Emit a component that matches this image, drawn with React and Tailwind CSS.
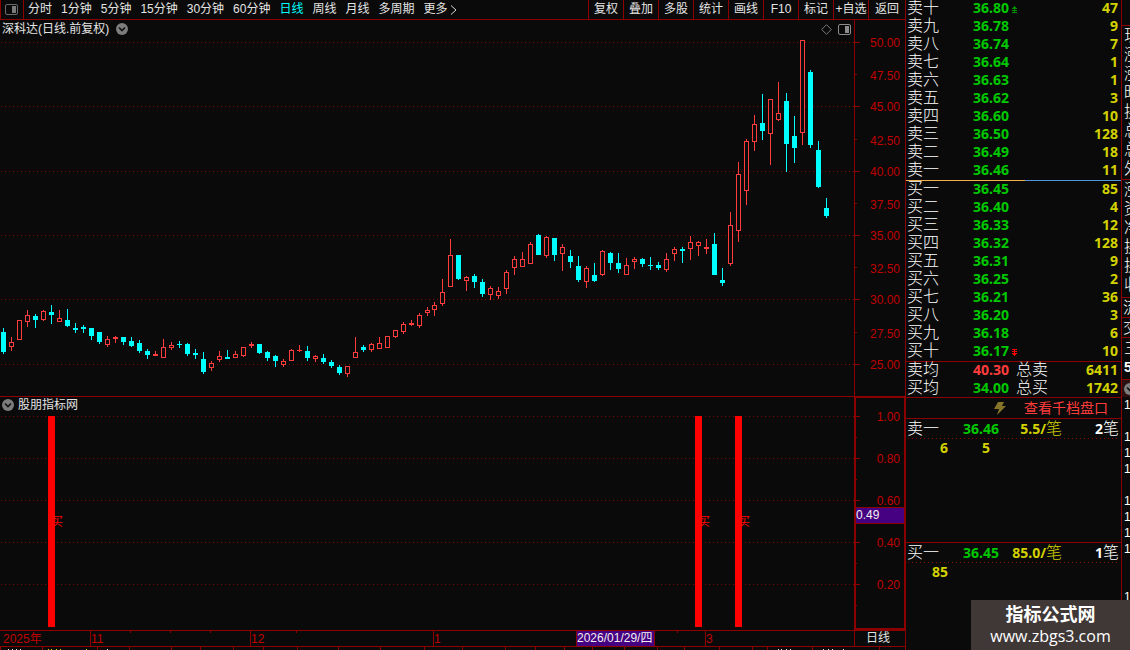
import React from "react";

// [x, high, bodyTop, bodyBottom, low, rising]
const candles = [
  [3, 328, 332, 352, 354, 0],
  [11, 337, 342, 347, 351, 1],
  [19, 320, 320, 340, 340, 1],
  [27, 310, 315, 322, 327, 1],
  [35, 314, 316, 320, 328, 0],
  [43, 310, 311, 320, 321, 1],
  [51, 305, 312, 315, 324, 0],
  [59, 310, 318, 322, 322, 1],
  [67, 309, 320, 326, 327, 0],
  [75, 323, 328, 330, 333, 0],
  [83, 325, 327, 329, 333, 0],
  [91, 328, 328, 336, 340, 0],
  [99, 332, 332, 342, 344, 0],
  [107, 336, 339, 345, 347, 1],
  [115, 336, 337, 339, 343, 1],
  [123, 337, 337, 342, 345, 0],
  [131, 337, 341, 346, 347, 0],
  [139, 340, 343, 351, 353, 0],
  [147, 349, 351, 355, 359, 0],
  [155, 351, 354, 356, 356, 1],
  [163, 339, 347, 358, 358, 1],
  [171, 342, 345, 348, 350, 1],
  [179, 341, 344, 345, 348, 0],
  [187, 343, 344, 354, 356, 0],
  [195, 349, 353, 355, 359, 0],
  [203, 352, 359, 372, 374, 0],
  [211, 361, 363, 368, 371, 1],
  [219, 351, 356, 360, 362, 1],
  [227, 350, 357, 359, 359, 0],
  [235, 351, 354, 358, 358, 1],
  [243, 347, 347, 356, 357, 1],
  [251, 342, 344, 346, 348, 1],
  [259, 344, 344, 353, 354, 0],
  [267, 351, 352, 358, 361, 0],
  [275, 355, 356, 361, 367, 0],
  [283, 359, 361, 365, 367, 1],
  [291, 349, 350, 361, 361, 1],
  [299, 345, 350, 351, 352, 1],
  [307, 346, 351, 358, 361, 0],
  [315, 355, 356, 359, 362, 1],
  [323, 354, 358, 362, 364, 0],
  [331, 360, 362, 366, 368, 0],
  [339, 365, 367, 373, 375, 0],
  [347, 366, 366, 374, 377, 1],
  [355, 337, 352, 358, 358, 1],
  [363, 345, 347, 350, 352, 0],
  [371, 343, 344, 350, 352, 1],
  [379, 337, 343, 349, 349, 1],
  [387, 336, 336, 348, 348, 1],
  [395, 330, 330, 337, 338, 1],
  [403, 322, 324, 332, 334, 1],
  [411, 320, 323, 325, 326, 1],
  [419, 313, 315, 326, 328, 1],
  [427, 307, 310, 313, 316, 1],
  [434, 302, 305, 310, 316, 1],
  [442, 279, 292, 304, 306, 1],
  [450, 239, 255, 287, 287, 1],
  [458, 255, 255, 279, 280, 0],
  [466, 276, 277, 281, 291, 1],
  [474, 274, 276, 282, 288, 0],
  [482, 279, 282, 294, 297, 0],
  [490, 286, 288, 295, 300, 1],
  [498, 287, 291, 296, 299, 1],
  [506, 270, 272, 289, 294, 1],
  [514, 256, 259, 268, 275, 1],
  [522, 252, 259, 267, 267, 1],
  [530, 242, 244, 264, 264, 1],
  [538, 234, 235, 255, 255, 0],
  [546, 236, 237, 256, 258, 1],
  [554, 238, 238, 255, 261, 0],
  [562, 244, 247, 254, 271, 1],
  [570, 250, 256, 262, 268, 0],
  [578, 256, 266, 280, 282, 0],
  [586, 266, 268, 282, 288, 1],
  [594, 263, 275, 281, 282, 0],
  [602, 250, 251, 275, 276, 1],
  [610, 252, 253, 263, 270, 0],
  [618, 253, 263, 269, 273, 0],
  [626, 258, 265, 275, 275, 1],
  [634, 257, 259, 262, 269, 1],
  [642, 258, 259, 264, 267, 0],
  [650, 257, 265, 266, 270, 0],
  [658, 262, 265, 268, 270, 0],
  [666, 253, 259, 270, 272, 1],
  [674, 247, 249, 254, 261, 1],
  [682, 247, 249, 251, 263, 0],
  [690, 236, 242, 249, 260, 1],
  [698, 241, 242, 246, 256, 1],
  [706, 239, 247, 249, 254, 1],
  [714, 233, 244, 275, 275, 0],
  [722, 268, 280, 283, 286, 0],
  [730, 212, 225, 264, 266, 1],
  [738, 162, 174, 231, 242, 1],
  [746, 139, 141, 191, 205, 1],
  [754, 115, 124, 142, 151, 1],
  [762, 94, 123, 131, 140, 0],
  [770, 99, 99, 134, 165, 1],
  [778, 82, 113, 120, 121, 1],
  [786, 93, 101, 144, 172, 0],
  [794, 116, 136, 148, 163, 0],
  [802, 40, 40, 133, 145, 1],
  [810, 70, 72, 145, 148, 0],
  [818, 141, 150, 187, 188, 0],
  [826, 198, 208, 216, 218, 0],
];

const priceTicks = [
  ["50.00", 42],
  ["47.50", 75],
  ["45.00", 106],
  ["42.50", 140],
  ["40.00", 171],
  ["37.50", 204],
  ["35.00", 235],
  ["32.50", 268],
  ["30.00", 299],
  ["27.50", 333],
  ["25.00", 364],
];

const signalTicks = [
  ["1.00", 416],
  ["0.80", 458],
  ["0.60", 500],
  ["0.40", 542],
  ["0.20", 584],
];

const signals = [48, 695, 735];

const periods = [
  "分时",
  "1分钟",
  "5分钟",
  "15分钟",
  "30分钟",
  "60分钟",
  "日线",
  "周线",
  "月线",
  "多周期",
];

const tools = ["复权", "叠加", "多股", "统计", "画线", "F10", "标记", "+自选"];

const asks = [
  ["卖十", "36.80", 47],
  ["卖九", "36.78", 9],
  ["卖八", "36.74", 7],
  ["卖七", "36.64", 1],
  ["卖六", "36.63", 1],
  ["卖五", "36.62", 3],
  ["卖四", "36.60", 10],
  ["卖三", "36.50", 128],
  ["卖二", "36.49", 18],
  ["卖一", "36.46", 11],
];

const bids = [
  ["买一", "36.45", 85],
  ["买二", "36.40", 4],
  ["买三", "36.33", 12],
  ["买四", "36.32", 128],
  ["买五", "36.31", 9],
  ["买六", "36.25", 2],
  ["买七", "36.21", 36],
  ["买八", "36.20", 3],
  ["买九", "36.18", 6],
  ["买十", "36.17", 10],
];

const DottedLine = () => (
  <div className="h-px mx-0.5 bg-[repeating-linear-gradient(90deg,#8c0000_0_1px,transparent_1px_4px)]" />
);

const GridLine = ({ y }) => (
  <line
    x1="1"
    x2="100%"
    y1={y}
    y2={y}
    stroke="#7c0000"
    strokeDasharray="1 3"
    transform="translate(0 0.5)"
  />
);

const ChevronBadge = () => (
  <svg width="12" height="12" viewBox="0 0 12 12">
    <circle cx="6" cy="6" r="6" fill="#7d7d7d" />
    <path d="M3 4.5l3 3 3-3" fill="none" stroke="#111" strokeWidth="1.6" />
  </svg>
);

const PanelIcon = ({ bright }) => (
  <svg width="13" height="11" viewBox="0 0 13 11">
    <rect
      x="0.5"
      y="0.5"
      width="12"
      height="10"
      rx="1.5"
      fill="none"
      stroke={bright ? "#8c8c8c" : "#6a6a6a"}
    />
    <rect x="7" y="2" width="4" height="7" fill={bright ? "#8c8c8c" : "#7a7a7a"} />
  </svg>
);

const Toolbar = () => (
  <nav className="h-5 flex border-b border-[#8c0000] leading-[19px] whitespace-nowrap">
    <button
      aria-label="面板"
      className="w-6 flex items-center justify-center pr-0.5 border-x border-[#8c0000]"
    >
      <PanelIcon />
    </button>
    <div className="flex-1 flex gap-[9px] pl-1">
      {periods.map((name) => (
        <button key={name} className={name === "日线" ? "text-[#00ffff]" : ""}>
          {name}
        </button>
      ))}
      <button className="flex items-center gap-0.5">
        更多
        <svg width="7" height="10" viewBox="0 0 7 10">
          <path d="M1 0.5l5 4.5-5 4.5" fill="none" stroke="#d8d8d8" />
        </svg>
      </button>
    </div>
    {tools.map((name) => (
      <button
        key={name}
        className="w-[35px] text-center border-l border-[#8c0000]"
      >
        {name}
      </button>
    ))}
    <button className="w-[37px] text-center border-l border-[#8c0000]">
      返回
    </button>
  </nav>
);

const Candle = ({ data }) => {
  const [x, high, top, bottom, low, rising] = data;
  const color = rising ? "#ff3c3c" : "#00ffff";
  const height = bottom - top;

  return (
    <g fill={color}>
      <rect x={x} y={high} width="1" height={low - high} />
      <rect x={x - 2} y={top} width="5" height={height} />
      {rising && height > 2 ? (
        <rect
          x={x - 1}
          y={top + 1}
          width="3"
          height={height - 2}
          fill="#0a0a0a"
        />
      ) : null}
    </g>
  );
};

const PriceChart = () => (
  <section className="flex h-[376px]">
    <div className="flex-1 min-w-0">
      <header className="h-[18px] flex items-center pl-0.5 pr-[3px]">
        <h1>深科达(日线.前复权)</h1>
        <button aria-label="指标菜单" className="ml-[7px]">
          <ChevronBadge />
        </button>
        <svg className="ml-auto mr-1.5" width="11" height="11" viewBox="0 0 11 11">
          <path
            d="M5.5 0.7l4.8 4.8-4.8 4.8L0.7 5.5z"
            fill="none"
            stroke="#7a7a7a"
          />
        </svg>
        <PanelIcon bright />
      </header>
      <svg className="block w-full h-[358px]" shapeRendering="crispEdges">
        <g transform="translate(0 -38)">
          {priceTicks
            .filter((_, i) => i % 2 === 0)
            .map(([label, y]) => (
              <GridLine key={label} y={y} />
            ))}
          {candles.map((data) => (
            <Candle key={data[0]} data={data} />
          ))}
        </g>
      </svg>
    </div>
    <svg className="block w-[51px] h-full border-l border-[#8c0000] text-xs">
      <g transform="translate(0 -20)" fill="#c00000">
        {priceTicks.map(([label, y], i) => (
          <g key={label}>
            <rect
              y={i % 2 ? y - 1 : y}
              width={i % 2 ? 2 : 5}
              height="1"
              fill="#8c0000"
            />
            <text x="45" y={y + 5} textAnchor="end">
              {label}
            </text>
          </g>
        ))}
      </g>
    </svg>
  </section>
);

const SignalChart = () => (
  <section className="flex h-[234px] border-t border-[#8c0000]">
    <div className="flex-1 min-w-0">
      <header className="h-4 flex items-center gap-1 pl-0.5">
        <button aria-label="指标菜单">
          <ChevronBadge />
        </button>
        <h2>股朋指标网</h2>
      </header>
      <svg className="block w-full h-[217px] text-xs">
        <g transform="translate(0 -413)" fill="#ff0000">
          {signalTicks.map(([label, y]) => (
            <GridLine key={label} y={y} />
          ))}
          {signals.map((x) => (
            <g key={x}>
              <text x={x + 3} y="526">
                买
              </text>
              <rect x={x} y="416" width="7" height="211" />
            </g>
          ))}
        </g>
      </svg>
    </div>
    <div className="w-[51px] border-2 border-t border-r border-[#8c0000]">
      <svg className="block w-full h-full text-xs">
        <g transform="translate(0 -398)" fill="#c00000">
          {signalTicks.map(([label, y]) => (
            <g key={label}>
              <rect y={y} width="4" height="1" fill="#8c0000" />
              <rect y={y + 21} width="1" height="1" fill="#8c0000" />
              <text x="44" y={y + 5} textAnchor="end">
                {label}
              </text>
            </g>
          ))}
          <rect y="507" width="100%" height="17" fill="#8c0000" />
          <rect y="508" width="100%" height="15" fill="#460082" />
          <text x="0" y="519" fill="#f0f0f0">
            0.49
          </text>
        </g>
      </svg>
    </div>
  </section>
);

const months = [
  [90, "11"],
  [250, "12"],
  [433, "1"],
  [705, "3"],
];

const TimeAxis = () => (
  <div className="flex h-4 border-t border-[#8c0000]">
    <svg className="block flex-1 h-[15px] text-xs" fill="#c00000">
      <text x="3" y="12">
        2025年
      </text>
      {months.map(([x, label]) => (
        <g key={x}>
          <rect x={x} width="1" height="15" fill="#8c0000" />
          <text x={x + 1} y="12">
            {label}
          </text>
        </g>
      ))}
      {[130, 170, 210, 296, 677].map((x) => (
        <rect key={x} x={x} width="1" height="2" fill="#8c0000" />
      ))}
      <rect x="576" width="79" height="15" fill="#8c0000" />
      <rect x="577" width="77" height="15" fill="#460082" />
      <text x="577" y="11" fill="#f0f0f0">
        2026/01/29/四
      </text>
    </svg>
    <button className="w-[51px] border-l border-[#8c0000] leading-[15px] pr-1">
      日线
    </button>
  </div>
);

const footerLines = [
  0, 42, 97, 129, 171, 200, 233, 263, 297, 338, 380, 424, 462, 505, 535, 564,
  592, 624, 657, 684, 719, 752, 767, 812, 879,
];
const whiteMarks = [8, 12, 16, 20, 107, 778, 781, 786, 790, 823, 828, 832, 843];
const yellowMarks = [48, 51, 56, 60, 86];

const Footer = () => (
  <svg className="block w-full h-1 border-t border-[#8c0000]">
    {footerLines.map((x) => (
      <rect key={x} x={x} width="1" height="3" fill="#8c0000" />
    ))}
    {whiteMarks.map((x) => (
      <rect key={x} x={x} y="2" width="1" height="1" fill="#e4e4e4" />
    ))}
    {yellowMarks.map((x) => (
      <rect key={x} x={x} y="2" width="1" height="1" fill="#d2d200" />
    ))}
  </svg>
);

const DepthArrow = ({ down }) => (
  <svg
    className={`inline-block align-middle ml-[3px] ${
      down ? "text-[#ff0000] rotate-180" : "text-[#008c00]"
    }`}
    width="5"
    height="7"
    viewBox="0 0 5 7"
    fill="currentColor"
    shapeRendering="crispEdges"
  >
    <path d="M2 0h1v1h1v1h1v1H3v1h2v1H3v1h2v1H0V6h2V5H0V4h2V3H0V2h1V1h1z" />
  </svg>
);

const DepthTable = ({ rows, arrowRow, down }) => (
  <table className="w-full table-fixed text-base">
    <tbody>
      {rows.map(([label, price, volume], i) => (
        <tr key={label} className="h-[18px] align-top leading-4">
          <th className="w-[67px] pl-px text-left font-light">{label}</th>
          <td className="w-[43px] font-['Noto_Sans',sans-serif] text-sm leading-4 font-bold text-[#00c800] whitespace-nowrap">
            {price}
            {i === arrowRow && <DepthArrow down={down} />}
          </td>
          <td className="pr-[3px] text-right font-['Noto_Sans',sans-serif] text-sm leading-4 font-bold text-[#d2d200]">
            {volume}
          </td>
        </tr>
      ))}
    </tbody>
  </table>
);

const Figure = ({ children }) => (
  <b className="font-['Noto_Sans',sans-serif] text-sm leading-4 font-bold">
    {children}
  </b>
);

const TickHeader = ({ label, price, average, count }) => (
  <div className="flex items-center h-[19px] pl-px pr-0.5 text-base leading-4 font-light">
    <span className="w-14">{label}</span>
    <span className="text-[#00c800]">
      <Figure>{price}</Figure>
    </span>
    <span className="flex-1 text-right text-[#d2d200]">
      <Figure>{average}/</Figure>笔
    </span>
    <span className="w-[57px] text-right">
      <Figure>{count}</Figure>笔
    </span>
  </div>
);

const TickList = ({ volumes }) => (
  <div className="flex font-['Noto_Sans',sans-serif] text-sm leading-[18px] font-bold text-[#d2d200]">
    {volumes.map((volume) => (
      <span key={volume} className="w-[42px] text-right">
        {volume}
      </span>
    ))}
  </div>
);

const QuotePanel = () => (
  <aside className="w-[216px] shrink-0 flex flex-col border-l border-[#8c0000] text-white">
    <DepthTable rows={asks} arrowRow={0} />
    <div className="flex h-px">
      <div className="w-[119px] bg-[#f0b050]" />
      <div className="flex-1 bg-[#5096dc]" />
    </div>
    <DepthTable rows={bids} arrowRow={9} down />
    <table className="w-full table-fixed border-y border-[#8c0000] text-base">
      <tbody>
        <tr className="h-[18px] align-top leading-4">
          <th className="w-[67px] pl-px text-left font-light">卖均</th>
          <td className="w-[43px] text-[#ff3c3c]">
            <Figure>40.30</Figure>
          </td>
          <th className="w-8 text-left font-light">总卖</th>
          <td className="pr-[3px] text-right text-[#d2d200]">
            <Figure>6411</Figure>
          </td>
        </tr>
        <tr className="h-[18px] align-top leading-4">
          <th className="pl-px text-left font-light">买均</th>
          <td className="text-[#00c800]">
            <Figure>34.00</Figure>
          </td>
          <th className="text-left font-light">总买</th>
          <td className="pr-[3px] text-right text-[#d2d200]">
            <Figure>1742</Figure>
          </td>
        </tr>
      </tbody>
    </table>
    <a
      href="#depth"
      className="flex items-center justify-end gap-[18px] h-5 pr-[13px] text-sm leading-5 text-[#ff3c3c]"
    >
      <svg width="12" height="13" viewBox="0 0 12 13">
        <path d="M4 0h6L8 4h4L3 13l2-6H0z" fill="#857428" />
      </svg>
      查看千档盘口
    </a>
    <section className="h-[124px] border-t border-[#8c0000]">
      <TickHeader label="卖一" price="36.46" average="5.5" count="2" />
      <DottedLine />
      <TickList volumes={[6, 5]} />
    </section>
    <section className="flex-1 border-t border-[#8c0000]">
      <TickHeader label="买一" price="36.45" average="85.0" count="1" />
      <DottedLine />
      <TickList volumes={[85]} />
    </section>
  </aside>
);

// the details column is folded away, only its left edge shows
const DetailsEdge = () => (
  <aside className="w-[9px] shrink-0 h-[650px] overflow-hidden border-l border-[#8c0000] text-base font-light text-white">
    <div className="h-[26px] border-b border-[#8c0000]" />
    <div className="w-4 ml-0.5 leading-[19px] h-[153px]">
      {["现", "涨", "涨", "昨", "换", "总", "总", "外"].map((text, i) => (
        <div key={i}>{text}</div>
      ))}
    </div>
    <div className="w-4 pl-0.5 leading-[19px] h-[118px] border-t border-[#8c0000]">
      {["涨", "资", "净", "换", "换", "收"].map((text, i) => (
        <div key={i}>{text}</div>
      ))}
    </div>
    <div className="w-4 pl-px leading-[19px] border-t border-[#8c0000]">流</div>
    <div className="w-4 pl-px leading-[19px] border-t border-[#8c0000]">交</div>
    <div className="w-4 pl-0.5 leading-[21px] h-[42px] border-t border-[#8c0000]">
      <div>三</div>
      <b className="block leading-4 text-sm font-bold">5</b>
    </div>
    <div className="h-[18px] pl-0.5 pt-[3px] border-t border-[#8c0000] bg-[#2a1010]">
      <ChevronBadge />
    </div>
    <div className="pl-0.5 text-xs leading-4">
      <div>1</div>
      <div className="pt-4">1</div>
      <div>1</div>
      <div>1</div>
      <div className="pt-4">1</div>
      <div>1</div>
      <div>1</div>
      <div>1</div>
      <div className="pt-8">1</div>
    </div>
  </aside>
);

export default function App() {
  return (
    <div className="relative flex min-h-screen overflow-hidden bg-[#0a0a0a] text-xs text-[#e4e4e4] font-['Liberation_Sans','Noto_Sans_CJK_SC',sans-serif]">
      <main className="flex-1 min-w-0">
        <Toolbar />
        <PriceChart />
        <SignalChart />
        <TimeAxis />
        <Footer />
      </main>
      <QuotePanel />
      <DetailsEdge />
      <div className="absolute right-0 bottom-0 w-[159px] h-[50px] flex flex-col items-center pt-1 bg-[#403837] text-white">
        <strong className="text-lg leading-[22px]">指标公式网</strong>
        <a
          href="#site"
          className="text-base leading-5 font-['Open_Sans',sans-serif]"
        >
          www.zbgs3.com
        </a>
      </div>
    </div>
  );
}
